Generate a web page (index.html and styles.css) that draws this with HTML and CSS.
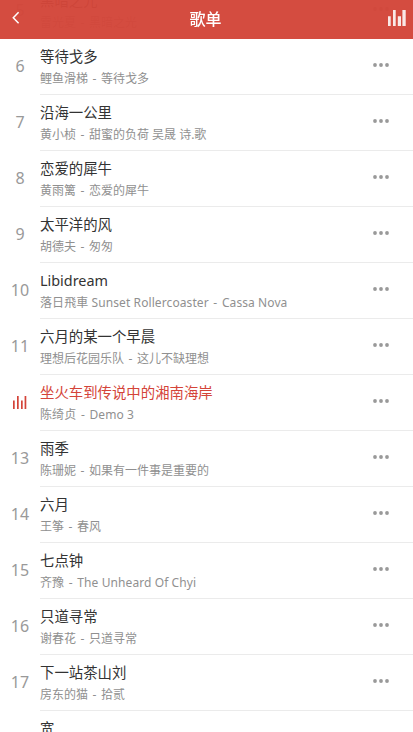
FILE: index.html
```html
<!DOCTYPE html>
<html lang="zh-CN">
<head>
<meta charset="utf-8">
<title>歌单</title>
<link rel="stylesheet" href="styles.css">
</head>
<body>
<header class="bar">
  <svg class="back" viewBox="0 0 8 14" width="8" height="14"><path d="M6.6 1.3 1.3 6.8l5.3 5.4"/></svg>
  <h1 class="heading">歌单</h1>
  <svg class="playing" viewBox="0 0 18 16" width="18" height="16"><path d="M0 6.3h2.7V16H0zM5 0h2.7v16H5zM9.8 6.3h3.2V16H9.8zM14.4 0h3.3v16h-3.3z"/></svg>
</header>
<ol class="list" id="list"></ol>
<script src="list.js"></script>
</body>
</html>
```
FILE: styles.css
```css
* { box-sizing: border-box; }
html, body { height: 100%; }
body {
  margin: 0;
  overflow: hidden;
  background: #fff;
  font-family: "Noto Sans", "Noto Sans CJK SC", sans-serif;
}
.bar {
  position: fixed;
  top: 0;
  left: 0;
  right: 0;
  z-index: 1;
  height: 39px;
  padding: 0 7px 0 12px;
  display: flex;
  align-items: center;
  justify-content: space-between;
  background: rgba(211, 70, 58, .97);
}
.back { fill: none; stroke: #fff; stroke-width: 1.5; margin-top: -3px; }
.playing { fill: #fff; opacity: .88; margin-top: -3px; }
.heading {
  margin: 0 0 0 3px;
  color: #fff;
  font-size: 16px;
  line-height: 39px;
  font-weight: 500;
}
.list { list-style: none; margin: -17px 0 0; padding: 0; }
.row { display: flex; height: 56px; }
.num {
  width: 40px;
  padding-bottom: 2px;
  display: flex;
  align-items: center;
  justify-content: center;
  color: #999;
  font-size: 16px;
}
.num svg { fill: #d44439; }
.body {
  flex: 1;
  min-width: 0;
  display: flex;
  align-items: center;
  justify-content: space-between;
  border-bottom: 1px solid #ebebeb;
  padding-right: 24px;
}
.title { font-size: 14.4px; line-height: 22px; color: #333; white-space: nowrap; }
.text { padding-top: 1px; }
.sub { font-size: 12px; line-height: 21px; color: #909090; white-space: nowrap; }
.dash { margin: 0 1.4px; }
.latin { letter-spacing: .09px; }
.active .title { color: #d44439; }
.more { fill: #999; margin-top: -3px; }
```
FILE: list.js
```js
const songs = [
  ["黑暗之光", "雷光夏 - 黑暗之光"],
  ["等待戈多", "鲤鱼滑梯 - 等待戈多"],
  ["沿海一公里", "黄小桢 - 甜蜜的负荷 吴晟 诗.歌"],
  ["恋爱的犀牛", "黄雨篱 - 恋爱的犀牛"],
  ["太平洋的风", "胡德夫 - 匆匆"],
  ["Libidream", "落日飛車 Sunset Rollercoaster - Cassa Nova"],
  ["六月的某一个早晨", "理想后花园乐队 - 这儿不缺理想"],
  ["坐火车到传说中的湘南海岸", "陈绮贞 - Demo 3"],
  ["雨季", "陈珊妮 - 如果有一件事是重要的"],
  ["六月", "王筝 - 春风"],
  ["七点钟", "齐豫 - The Unheard Of Chyi"],
  ["只道寻常", "谢春花 - 只道寻常"],
  ["下一站茶山刘", "房东的猫 - 拾贰"],
  ["宽", "宽"]
];
const first = 5;
const current = 12;
const bars = '<svg viewBox="0 0 14 14" width="14" height="14"><path d="M0 5.5h1.7V14H0zM4 1h1.7v13H4zM8 5.5h1.7V14H8zM11.6 1h1.7v13h-1.7z"/></svg>';
const dots = '<svg class="more" viewBox="0 0 16 4" width="16" height="4"><circle cx="2" cy="2" r="1.9"/><circle cx="8" cy="2" r="1.9"/><circle cx="14" cy="2" r="1.9"/></svg>';
document.getElementById("list").innerHTML = songs.map(([title, sub], i) => {
  const n = first + i;
  const on = n === current;
  const line = sub.replace(" - ", ' <span class="dash">-</span> ');
  const latin = /[A-Za-z]/.test(sub) ? " latin" : "";
  return `<li class="row${on ? " active" : ""}"><div class="num">${on ? bars : n}</div>` +
    `<div class="body"><div class="text"><div class="title">${title}</div><div class="sub${latin}">${line}</div></div>${dots}</div></li>`;
}).join("");
```
